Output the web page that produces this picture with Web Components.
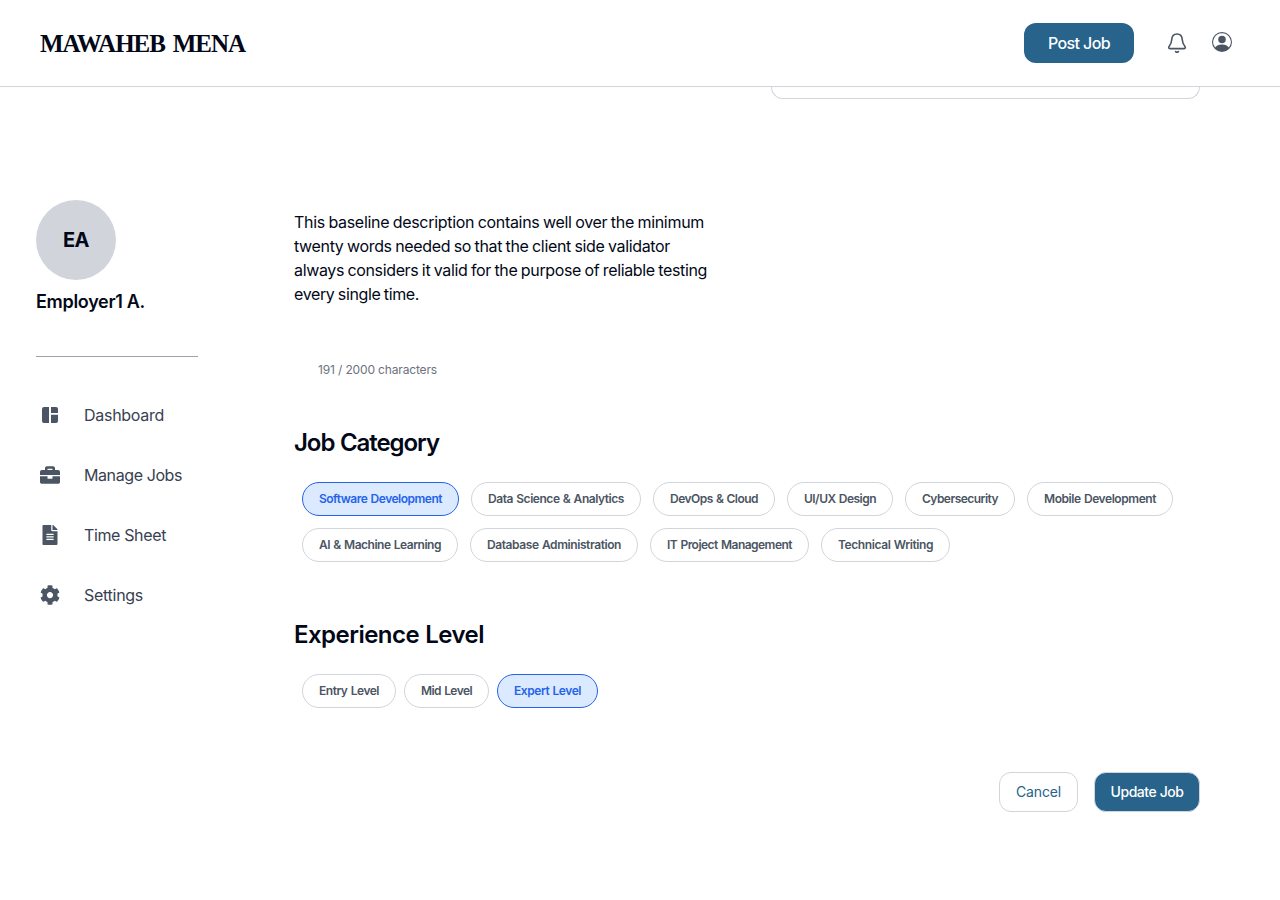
<!DOCTYPE html>
<html lang="en">
<head>
<meta charset="utf-8">
<title>Mawaheb MENA</title>
<style>
html,body{margin:0;height:100%}
body{font-family:Inter,"Liberation Sans",sans-serif;color:#020817;background:#fff;overflow:hidden}
</style>
</head>
<body>
<job-page></job-page>
<script>
const define = (name, html, after) => {
  const t = document.createElement('template');
  t.innerHTML = html;
  customElements.define(name, class extends HTMLElement {
    connectedCallback() {
      if (this.shadowRoot) return;
      this.attachShadow({mode: 'open'}).append(t.content.cloneNode(true));
      if (after) after(this, this.shadowRoot);
    }
  });
};

// Single line of text whose tracking is tuned to a given measure.
define('fit-text', `<style>
:host{display:inline-block;white-space:nowrap}
span{display:inline-block}
</style><span><slot></slot></span>`, (el, root) => {
  const w = +el.getAttribute('w'), span = root.querySelector('span');
  const extra = w - span.getBoundingClientRect().width;
  el.style.width = w + 'px';
  span.style.letterSpacing = extra / el.textContent.length + 'px';
});

const icons = {
  bell: `<svg width="20" height="20" viewBox="0 0 20 20" fill="none" stroke="currentColor" stroke-width="1.6" stroke-linecap="round" stroke-linejoin="round"><path d="M10 1C6.900 1 5 3.200 4.800 6.300c-.2 3.500-.8 5-2.700 7.300-.8 1-.3 2 .7 2h14.400c1 0 1.500-1 .7-2-1.900-2.300-2.500-3.800-2.700-7.300C15 3.200 13.100 1 10 1z"/><path d="M8.600 18.600c.8.700 2 .7 2.800 0"/></svg>`,
  user: `<svg width="20" height="20" viewBox="0 0 16 16" fill="currentColor"><path d="M11 6a3 3 0 1 1-6 0 3 3 0 0 1 6 0"/><path fill-rule="evenodd" d="M0 8a8 8 0 1 1 16 0A8 8 0 0 1 0 8m8-7a7 7 0 0 0-5.468 11.370C3.242 11.226 4.805 10 8 10s4.757 1.225 5.468 2.370A7 7 0 0 0 8 1"/></svg>`,
  dashboard: `<svg width="20" height="20" viewBox="0 0 20 20" fill="currentColor"><path d="M4 2h5v16H4a2 2 0 0 1-2-2V4a2 2 0 0 1 2-2zM11 2h5a2 2 0 0 1 2 2v4h-7zM11 9.700h7V16a2 2 0 0 1-2 2h-5z"/></svg>`,
  briefcase: `<svg width="20" height="20" viewBox="0 0 512 512" fill="currentColor"><path d="M320 336c0 8.840-7.160 16-16 16h-96c-8.840 0-16-7.160-16-16v-48H0v144c0 25.600 22.400 48 48 48h416c25.600 0 48-22.400 48-48V288H320v48zm144-208h-80V80c0-25.600-22.400-48-48-48H176c-25.600 0-48 22.400-48 48v48H48c-25.600 0-48 22.400-48 48v80h512v-80c0-25.600-22.400-48-48-48zm-144 0H192V96h128v32z"/></svg>`,
  file: `<svg width="20" height="20" viewBox="0 0 384 512" fill="currentColor"><path d="M224 136V0H24C10.700 0 0 10.700 0 24v464c0 13.300 10.700 24 24 24h336c13.300 0 24-10.700 24-24V160H248c-13.200 0-24-10.800-24-24zm64 236c0 6.600-5.400 12-12 12H108c-6.600 0-12-5.400-12-12v-8c0-6.600 5.400-12 12-12h168c6.600 0 12 5.400 12 12v8zm0-64c0 6.600-5.400 12-12 12H108c-6.600 0-12-5.400-12-12v-8c0-6.600 5.400-12 12-12h168c6.600 0 12 5.400 12 12v8zm0-72v8c0 6.600-5.400 12-12 12H108c-6.600 0-12-5.400-12-12v-8c0-6.600 5.400-12 12-12h168c6.600 0 12 5.400 12 12zm96-114.100v6.100H256V0h6.100c6.400 0 12.500 2.500 17 7l97.900 98c4.500 4.500 7 10.600 7 16.900z"/></svg>`,
  gear: `<svg width="20" height="20" viewBox="0 0 512 512" fill="currentColor"><path d="M487.400 315.700l-42.600-24.600c4.300-23.200 4.300-47 0-70.200l42.600-24.600c4.900-2.800 7.100-8.600 5.500-14-11.100-35.600-30-67.800-54.700-94.600-3.800-4.100-10-5.100-14.800-2.300L380.800 110c-17.900-15.400-38.500-27.300-60.800-35.100V25.800c0-5.600-3.900-10.500-9.400-11.700-36.700-8.200-74.300-7.800-109.200 0-5.500 1.200-9.400 6.100-9.400 11.700V75c-22.200 7.900-42.800 19.800-60.800 35.100L88.700 85.500c-4.900-2.800-11-1.900-14.800 2.300-24.700 26.700-43.600 58.900-54.700 94.600-1.700 5.400.6 11.200 5.500 14L67.300 221c-4.300 23.200-4.300 47 0 70.200l-42.600 24.600c-4.900 2.800-7.100 8.600-5.500 14 11.100 35.600 30 67.800 54.700 94.600 3.800 4.100 10 5.100 14.800 2.300l42.600-24.600c17.900 15.400 38.500 27.300 60.800 35.100v49.200c0 5.600 3.900 10.500 9.400 11.700 36.700 8.200 74.300 7.800 109.200 0 5.500-1.200 9.400-6.100 9.400-11.700v-49.200c22.200-7.900 42.800-19.800 60.800-35.100l42.600 24.600c4.900 2.800 11 1.900 14.800-2.300 24.700-26.700 43.600-58.900 54.700-94.600 1.500-5.500-.7-11.300-5.600-14.100zM256 336c-44.100 0-80-35.900-80-80s35.900-80 80-80 80 35.900 80 80-35.900 80-80 80z"/></svg>`
};
define('ui-icon', `<style>:host{display:block;width:20px;height:20px;color:#4b5563}svg{display:block;overflow:visible}</style>`, (el, root) => {
  root.append(document.createRange().createContextualFragment(icons[el.getAttribute('name')]));
});

define('ui-button', `<style>
:host{display:flex;align-items:center;justify-content:center;box-sizing:border-box;height:40px;border-radius:12px;background:#27638a;color:#fff;font-size:16px;font-weight:500;line-height:24px}
:host([small]){font-size:14px;border:1px solid #d1d5db}
:host([outline]){background:#fff;color:#27638a;font-weight:400}
</style><slot></slot>`);

define('choice-chip', `<style>
:host{display:flex;align-items:center;box-sizing:border-box;height:34px;padding:0 16px;border:1px solid #d1d5db;border-radius:17px;font-size:12px;line-height:16px;font-weight:600;color:#4b5563;background:#fff;word-spacing:.06em}
:host([selected]){border-color:#2563eb;background:#dbeafe;color:#2563eb}
</style><slot></slot>`);

define('chip-group', `<style>
:host{display:block}
h2{margin:0 0 23px;font-size:24px;line-height:32px;height:32px;font-weight:600;word-spacing:.03em}
div{display:flex;flex-wrap:wrap;gap:12px;padding-left:8px}
:host([tight]) div{gap:8px}
</style><h2><slot name="title"></slot></h2><div><slot></slot></div>`);

define('top-bar', `<style>
:host{display:flex;align-items:center;justify-content:space-between;box-sizing:border-box;height:87px;padding:0 48px 0 40px;border-bottom:1px solid #d1d5db;background:#fff}
.brand{font:bold 25px/32px "Liberation Serif",serif;word-spacing:.1em;padding-top:2px}
.actions{display:flex;align-items:center}
ui-button{width:110px}
.bell{margin:0 25px 0 33px}
.user{margin-top:-3px}
</style>
<div class="brand"><fit-text w="205">MAWAHEB MENA</fit-text></div>
<div class="actions"><ui-button><fit-text w="62">Post Job</fit-text></ui-button><ui-icon class="bell" name="bell"></ui-icon><ui-icon class="user" name="user"></ui-icon></div>`);

define('nav-item', `<style>
:host{display:flex;align-items:center;gap:24px;height:60px;padding-left:4px;color:#374151;font-size:16px;line-height:24px}
</style><slot name="icon"></slot><slot></slot>`);

define('side-bar', `<style>
:host{display:block;box-sizing:border-box;width:294px;padding:113px 0 0 36px;flex:none}
.avatar{display:flex;align-items:center;justify-content:center;width:80px;height:80px;border-radius:50%;background:#d1d5db;font-size:20px;font-weight:700}
.name{margin-top:8px;font-size:18px;line-height:28px;font-weight:600}
hr{width:162px;height:1px;margin:40px 0 28px;border:0;background:#9ca3af}
</style>
<div class="avatar"><fit-text w="26">EA</fit-text></div>
<div class="name"><fit-text w="109">Employer1 A.</fit-text></div>
<hr>
<nav>
<nav-item><ui-icon slot="icon" name="dashboard"></ui-icon><fit-text w="80">Dashboard</fit-text></nav-item>
<nav-item><ui-icon slot="icon" name="briefcase"></ui-icon><fit-text w="98">Manage Jobs</fit-text></nav-item>
<nav-item><ui-icon slot="icon" name="file"></ui-icon><fit-text w="82">Time Sheet</fit-text></nav-item>
<nav-item><ui-icon slot="icon" name="gear"></ui-icon><fit-text w="59">Settings</fit-text></nav-item>
</nav>`);

define('job-form', `<style>
:host{display:block;width:906px}
.field{box-sizing:border-box;width:429px;height:12px;margin-left:auto;border:1px solid #d1d5db;border-top:0;border-radius:0 0 12px 12px}
.description{margin-top:111px;font-size:16px;line-height:24px;word-spacing:-.04em}
.description fit-text{display:block}
.count{margin:56px 0 0 24px;font-size:12px;line-height:16px;color:#6b7280;height:16px}
.count fit-text{display:block}
.category{margin-top:49px}
.level{margin-top:57px}
.actions{display:flex;justify-content:flex-end;gap:16px;margin-top:64px}
.cancel{width:79px}.update{width:106px}
</style>
<div class="field"></div>
<div class="description">
<fit-text w="410">This baseline description contains well over the minimum</fit-text>
<fit-text w="376">twenty words needed so that the client side validator</fit-text>
<fit-text w="413">always considers it valid for the purpose of reliable testing</fit-text>
<fit-text w="125">every single time.</fit-text>
</div>
<div class="count"><fit-text w="119">191 / 2000 characters</fit-text></div>
<chip-group class="category"><fit-text slot="title" w="145">Job Category</fit-text>
<choice-chip selected><fit-text w="123">Software Development</fit-text></choice-chip>
<choice-chip><fit-text w="136">Data Science &amp; Analytics</fit-text></choice-chip>
<choice-chip><fit-text w="88">DevOps &amp; Cloud</fit-text></choice-chip>
<choice-chip><fit-text w="72">UI/UX Design</fit-text></choice-chip>
<choice-chip><fit-text w="76">Cybersecurity</fit-text></choice-chip>
<choice-chip><fit-text w="112">Mobile Development</fit-text></choice-chip>
<choice-chip><fit-text w="122">AI &amp; Machine Learning</fit-text></choice-chip>
<choice-chip><fit-text w="134">Database Administration</fit-text></choice-chip>
<choice-chip><fit-text w="125">IT Project Management</fit-text></choice-chip>
<choice-chip><fit-text w="95">Technical Writing</fit-text></choice-chip>
</chip-group>
<chip-group class="level" tight><fit-text slot="title" w="190">Experience Level</fit-text>
<choice-chip><fit-text w="60">Entry Level</fit-text></choice-chip>
<choice-chip><fit-text w="51">Mid Level</fit-text></choice-chip>
<choice-chip selected><fit-text w="67">Expert Level</fit-text></choice-chip>
</chip-group>
<div class="actions"><ui-button class="cancel" small outline><fit-text w="45">Cancel</fit-text></ui-button><ui-button class="update" small><fit-text w="73">Update Job</fit-text></ui-button></div>`);

define('job-page', `<style>
:host{display:block;width:1280px;height:900px;overflow:hidden}
main{display:flex}
</style><top-bar></top-bar><main><side-bar></side-bar><job-form></job-form></main>`);
</script>
</body>
</html>
